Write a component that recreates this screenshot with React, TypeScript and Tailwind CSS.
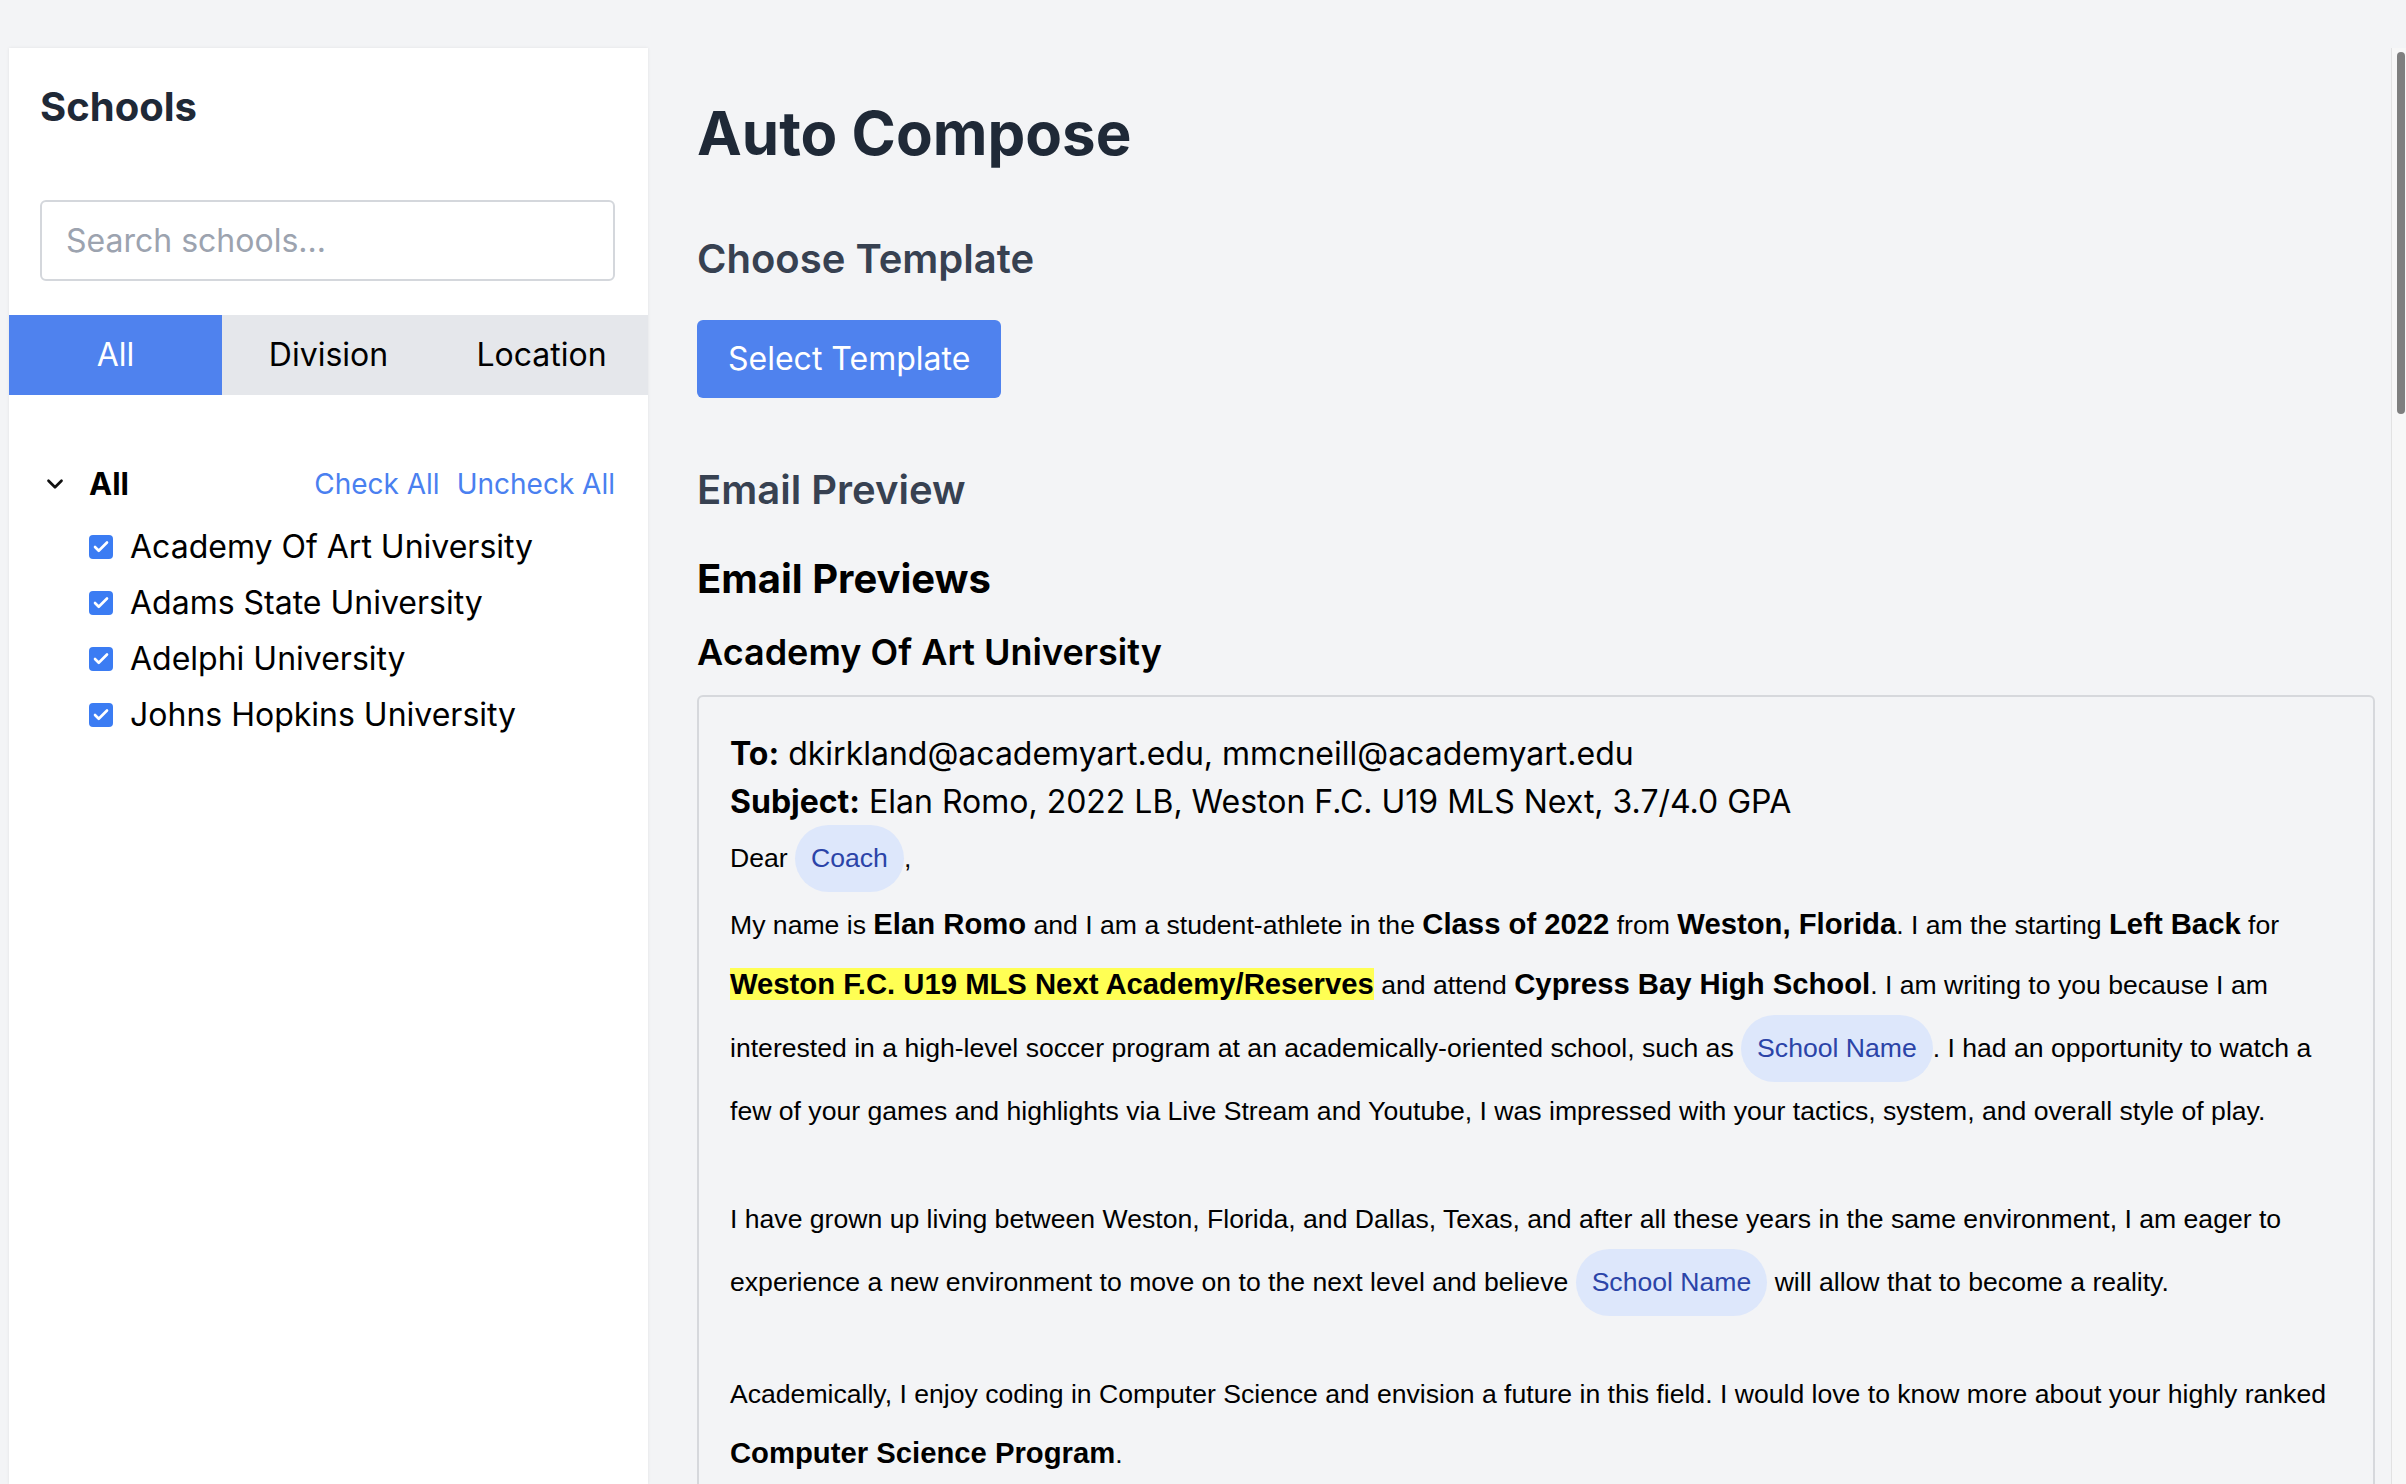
import React, { useState } from "react";
import { Check, ChevronDown } from "lucide-react";

type School = { name: string; to: string };

const schools: School[] = [
  { name: "Academy Of Art University", to: "dkirkland@academyart.edu, mmcneill@academyart.edu" },
  { name: "Adams State University", to: "jcoach@adams.edu, soccer@adams.edu" },
  { name: "Adelphi University", to: "mensoccer@adelphi.edu, recruiting@adelphi.edu" },
  { name: "Johns Hopkins University", to: "soccer@jhu.edu, jhusoccer@jhu.edu" },
];

const tabs = ["All", "Division", "Location"];

// placeholder chip shown where the template has a merge field
const Tag: React.FC<{ children: React.ReactNode }> = ({ children }) => (
  <span className="inline-block rounded-full bg-[#dde7fb] px-[16px] py-[4px] text-[#2b44a8]">
    {children}
  </span>
);

const B: React.FC<{ children: React.ReactNode; mark?: boolean }> = ({ children, mark }) => (
  <b className={mark ? "bg-[#ffff54] text-[29.25px] font-bold" : "text-[29.25px] font-bold"}>{children}</b>
);

const Checkbox: React.FC = () => (
  <span className="flex h-[24px] w-[24px] shrink-0 items-center justify-center rounded-[4px] bg-[#3b7cf3]">
    <Check size={18} strokeWidth={3.5} color="#ffffff" />
  </span>
);

const EmailCard: React.FC<{ school: School }> = ({ school }) => (
  <div className="mt-[18px] rounded-[6px] border-2 border-[#d6d8dc] pl-[31px] pr-[28px] pt-[33px] pb-[40px]">
    <div className="font-['Inter',sans-serif] text-[32px] leading-[47.5px] text-black">
      <div>
        <span className="font-bold">To:</span> {school.to}
      </div>
      <div>
        <span className="font-bold">Subject:</span> Elan Romo, 2022 LB, Weston F.C. U19 MLS Next, 3.7/4.0 GPA
      </div>
    </div>
    <div className="font-['Liberation_Sans',Arial,sans-serif] text-[26.6px] leading-[59px] text-black">
      <div>
        Dear <Tag>Coach</Tag>,
      </div>
      <p className="mt-[3px]">
        My name is <B>Elan Romo</B> and I am a student-athlete in the <B>Class of 2022</B> from{" "}
        <B>Weston, Florida</B>. I am the starting <B>Left Back</B> for{" "}
        <B mark>Weston F.C. U19 MLS Next Academy/Reserves</B> and attend{" "}
        <B>Cypress Bay High School</B>. I am writing to you because I am interested in a high-level
        soccer program at an academically-oriented school, such as <Tag>School Name</Tag>. I had an
        opportunity to watch a few of your games and highlights via Live Stream and Youtube, I was
        impressed with your tactics, system, and overall style of play.
      </p>
      <p className="mt-[49px]">
        I have grown up living between Weston, Florida, and Dallas, Texas, and after all these years in
        the same environment, I am eager to experience a new environment to move on to the next level
        and believe <Tag>School Name</Tag> will allow that to become a reality.
      </p>
      <p className="mt-[49px]">
        Academically, I enjoy coding in Computer Science and envision a future in this field. I would love
        to know more about your highly ranked <B>Computer Science Program</B>.
      </p>
      <p className="mt-[49px]">
        I have attached my highlight video and player profile below, along with my upcoming tournament
        schedule. I would welcome the opportunity for you or your staff to see me play in person this
        season.
      </p>
      <p className="mt-[49px]">
        Thank you for your time and consideration. I look forward to hearing from you.
      </p>
      <p className="mt-[49px]">
        Sincerely,
        <br />
        Elan Romo
      </p>
    </div>
  </div>
);

const AutoComposePage: React.FC = () => {
  const [activeTab, setActiveTab] = useState("All");

  return (
    <div className="flex h-screen overflow-hidden bg-[#f3f4f6] pt-[48px] font-['Inter',sans-serif]">
      {/* Sidebar */}
      <aside className="ml-[9px] w-[639px] shrink-0 bg-white shadow-[0_0_3px_rgba(0,0,0,0.08)]">
        <div className="pl-[31px] pr-[33px] pt-[32px]">
          <h2 className="text-[40px] font-bold leading-[53px] text-[#1f2937]">Schools</h2>
          <input
            type="text"
            placeholder="Search schools..."
            className="mt-[67px] h-[81px] w-full rounded-[6px] border-2 border-[#d4d7dc] bg-white px-[24px] text-[32px] text-black outline-none placeholder:text-[#9ca3af]"
          />
        </div>

        <div className="mt-[34px] flex h-[80px]">
          {tabs.map((t) => (
            <button
              key={t}
              onClick={() => setActiveTab(t)}
              className={
                t === activeTab
                  ? "flex-1 bg-[#4f82ee] text-[32px] text-white"
                  : "flex-1 bg-[#e5e7eb] text-[32px] text-black"
              }
            >
              {t}
            </button>
          ))}
        </div>

        <div className="mt-[66px] flex h-[46px] items-center justify-between pl-[31px] pr-[33px]">
          <div className="flex items-center">
            <span className="flex w-[30px] justify-center">
              <ChevronDown size={26} strokeWidth={2.5} color="#111111" />
            </span>
            <span className="ml-[19px] text-[31px] font-bold text-black">All</span>
          </div>
          <div className="flex gap-[17px] text-[28px] text-[#4a80f0]">
            <button>Check All</button>
            <button>Uncheck All</button>
          </div>
        </div>

        <ul className="mt-[12px] pl-[80px]">
          {schools.map((s) => (
            <li key={s.name} className="flex h-[56px] items-center gap-[17px] text-[32px] text-black">
              <Checkbox />
              <span>{s.name}</span>
            </li>
          ))}
        </ul>
      </aside>

      {/* Main */}
      <main className="min-w-0 flex-1 overflow-hidden">
        <div className="pl-[49px] pr-[16px] pt-[52px] pb-[80px]">
          <h1 className="text-[60px] font-bold leading-[67px] text-[#1f2937]">Auto Compose</h1>

          <h2 className="mt-[65px] text-[40px] font-semibold leading-[53px] text-[#374151]">
            Choose Template
          </h2>
          <button className="mt-[35px] h-[78px] rounded-[6px] bg-[#4f82ee] px-[31px] text-[32px] text-white">
            Select Template
          </button>

          <h2 className="mt-[65px] text-[40px] font-semibold leading-[53px] text-[#374151]">
            Email Preview
          </h2>
          <h3 className="mt-[36px] text-[40px] font-bold leading-[53px] text-black">Email Previews</h3>

          {schools.map((s, i) => (
            <section key={s.name} className={i === 0 ? "mt-[22px]" : "mt-[60px]"}>
              <h4 className="text-[36px] font-semibold leading-[50px] text-black">{s.name}</h4>
              <EmailCard school={s} />
            </section>
          ))}
        </div>
      </main>

      {/* scrollbar of the main pane */}
      <div className="w-[15px] shrink-0 border-l border-[#e2e2e2] bg-[#f7f7f7]">
        <div className="ml-[5px] mr-[1px] mt-[4px] h-[362px] rounded-full bg-[#7f7f7f]" />
      </div>
    </div>
  );
};

export default AutoComposePage;
